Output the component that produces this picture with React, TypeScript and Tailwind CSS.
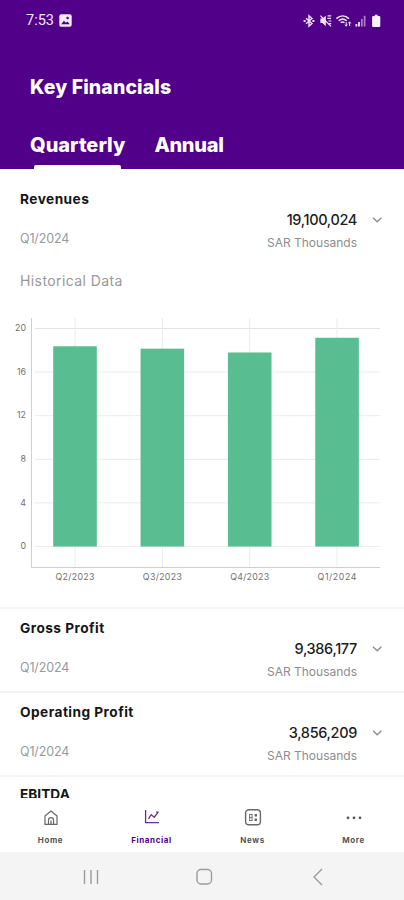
import * as React from "react";
import { clsx } from "clsx";

interface Metric {
  name: string;
  period: string;
  value: string;
}

const revenues: Metric = {
  name: "Revenues",
  period: "Q1/2024",
  value: "19,100,024",
};

const metrics: Metric[] = [
  { name: "Gross Profit", period: "Q1/2024", value: "9,386,177" },
  { name: "Operating Profit", period: "Q1/2024", value: "3,856,209" },
];

const history = [
  { quarter: "Q2/2023", value: 18.37 },
  { quarter: "Q3/2023", value: 18.15 },
  { quarter: "Q4/2023", value: 17.8 },
  { quarter: "Q1/2024", value: 19.15 },
];

const ticks = [0, 4, 8, 12, 16, 20];

const StatusIcons = () => (
  <svg width="80" height="14" viewBox="0 0 80 14" fill="none" stroke="#f1e6fb">
    {/* bluetooth */}
    <path d="m4 4.2 6 5.2-3 2.8V1.8l3 2.8L4 9.8" strokeWidth="1.4" />
    <path d="M1.6 7h2M10.4 7h2" strokeWidth="2" />
    {/* muted */}
    <path d="M18.4 4.6h2l3.4-2.8v10.4L20.4 9h-2z" fill="#f1e6fb" stroke="none" />
    <path d="m18.4 1.6 10.6 10.8" strokeWidth="1.3" />
    <path d="M25.4 4.4h3.6M26.4 7h3M25.6 1.9h3.6M26.6 9.6h2.6" strokeWidth="1.2" />
    {/* wifi */}
    <path d="M34.4 4.6c3.8-3.4 8.8-3.4 12.6 0M36.7 6.7c2.5-2.1 5.6-2.1 8 0M38.7 8.7c1.2-1 2.6-1 3.8 0" strokeWidth="1.5" />
    <path d="M44.2 8v4M43 10.6l1.2 1.6 1.2-1.6M47.6 12V8M46.4 9.4l1.2-1.6 1.2 1.6" strokeWidth="1" />
    {/* signal */}
    <path d="M54.4 12.6V10M57 12.6V8" strokeWidth="1.8" />
    <path d="M59.8 12.6V5M62.6 12.6V1.8" strokeWidth="1.8" opacity="0.55" />
    {/* battery */}
    <path d="M71.3 2h1.5V.8h2.8V2h1.5q1.2 0 1.2 1v9q0 1-1.2 1h-5.8q-1.2 0-1.2-1V3q0-1 1.2-1z" fill="#f8f1fd" stroke="none" />
  </svg>
);

const PictureIcon = () => (
  <svg width="13" height="13" viewBox="0 0 13 13">
    <rect x="0.3" y="0.3" width="12.4" height="12.4" rx="2" fill="#f3eafa" />
    <path d="m2.2 10.3 2.7-3.5 2 2 1.6-1.4 2.3 2.9z" fill="#510089" />
    <circle cx="8.6" cy="4" r="1.3" fill="#510089" />
  </svg>
);

const Chevron = () => (
  <svg width="12" height="8" viewBox="0 0 12 8" fill="none" stroke="#8d8d8d" strokeWidth="1.4">
    <path d="M2 1.8 6.2 5.7l4.2-3.9" />
  </svg>
);

const MetricRow = ({ metric }: { metric: Metric }) => (
  <div className="flex h-[82px] justify-between pl-5 pr-[21px]">
    <div className="pt-[9px]">
      <h2 className="text-[13.7px] leading-[20px] font-bold tracking-[0.45px] text-[#161616]">
        {metric.name}
      </h2>
      <p className="mt-5 text-[12.5px] leading-[20px] tracking-[-0.15px] text-[#969b9d]">
        {metric.period}
      </p>
    </div>
    <div className="flex gap-[14px] pt-[29px]">
      <div className="text-right">
        <p className="text-[14.5px] leading-[22px] font-medium tracking-[-0.35px] text-[#1d1d1d]">
          {metric.value}
        </p>
        <p className="mt-[2px] text-[12px] leading-[20px] text-[#8d8d8d]">SAR Thousands</p>
      </div>
      <div className="pt-[7px]">
        <Chevron />
      </div>
    </div>
  </div>
);

const HistoryChart = () => {
  const y = (v: number) => 228.5 - v * 10.9;
  const x = (i: number) => 75 + i * 87.35;

  return (
    <svg width="404" height="276" viewBox="0 0 404 276" className="block">
      {ticks.map((t) => (
        <g key={t}>
          <line x1="35" x2="380" y1={y(t)} y2={y(t)} stroke={t === 20 ? "#e3e3e3" : "#ececec"} />
          <text x="26" y={y(t) + 2.7} textAnchor="end" fontSize="8.8" fill="#707070">
            {t}
          </text>
        </g>
      ))}
      {history.map((h, i) => (
        <g key={h.quarter}>
          <line x1={x(i)} x2={x(i)} y1="0" y2="249" stroke="#ebebeb" />
          <rect x={x(i) - 21.8} y={y(h.value)} width="43.6" height={y(0) - y(h.value)} fill="#58be91" />
          <text x={x(i)} y="262.4" textAnchor="middle" fontSize="8.8" fill="#707070" textLength="39">
            {h.quarter}
          </text>
        </g>
      ))}
      <path d="M31.5 0v249.5H380" fill="none" stroke="#cfcfcf" />
    </svg>
  );
};

const icons = {
  home: (
    <svg width="16" height="18" viewBox="0 0 16 18" fill="none" stroke="#686868" strokeWidth="1.2">
      <path d="M2 8 8 3l6 5v8.4H2z" strokeLinejoin="round" />
      <path d="M5.5 16.2V12q0-2.3 2.5-2.3t2.5 2.3v4.2M8 12.6v3.5" />
    </svg>
  ),
  financial: (
    <svg width="16" height="18" viewBox="0 0 16 18" fill="none" stroke="#62309d" strokeWidth="1.3">
      <path d="M1.6 2v12.6H15" />
      <path d="m4.4 10.8 2.8-4.2 3 2.6 4-5M12.2 4.2h2.4" />
    </svg>
  ),
  news: (
    <svg width="18" height="18" viewBox="0 0 18 18" fill="none" stroke="#686868">
      <rect x="1.6" y="1.8" width="14.8" height="15" rx="3.4" strokeWidth="1.4" />
      <path d="M5.6 6v7M8 6v7M5.2 6.4h3.2M5.2 9.5h3.2M5.2 12.6h3.2" strokeWidth="0.9" />
      <path d="M10.6 7.3h2.4M10.6 11.7h2.4" strokeWidth="2.6" />
    </svg>
  ),
  more: (
    <svg width="18" height="18" viewBox="0 0 18 18" fill="#555">
      <circle cx="3" cy="9.8" r="1.4" />
      <circle cx="9" cy="9.8" r="1.4" />
      <circle cx="15" cy="9.8" r="1.4" />
    </svg>
  ),
};

const navItems: { label: string; icon: React.ReactNode; active?: boolean }[] = [
  { label: "Home", icon: icons.home },
  { label: "Financial", icon: icons.financial, active: true },
  { label: "News", icon: icons.news },
  { label: "More", icon: icons.more },
];

const Header = () => (
  <header className="flex h-[169px] flex-col bg-[#510089] text-white">
    <div className="flex h-[41px] items-center justify-between pl-[26px] pr-[22px]">
      <div className="flex items-center gap-[5px]">
        <span className="font-['Roboto'] text-[14.5px] text-[#f1e6fb]">7:53</span>
        <PictureIcon />
      </div>
      <StatusIcons />
    </div>
    <h1 className="mt-[32px] pl-[30px] text-[19.5px] leading-[28px] font-extrabold tracking-[0.1px]">
      Key Financials
    </h1>
    <nav className="mt-auto flex gap-[29px] pl-[30px] text-[20px] leading-[28px] font-extrabold">
      <button className="flex flex-col pt-px">
        Quarterly
        <span className="mt-[6px] ml-1 h-1 w-[87px] rounded-t-xs bg-white" />
      </button>
      <button className="flex flex-col pt-px tracking-[-0.3px]">Annual</button>
    </nav>
  </header>
);

export default function App() {
  return (
    <div className="flex h-[900px] w-[404px] flex-col overflow-hidden bg-white font-['Inter','Liberation_Sans',sans-serif]">
      <Header />
      <main className="h-[629px] overflow-hidden pt-[11px]">
        <MetricRow metric={revenues} />
        <h3 className="mt-[9px] pl-5 text-[14px] leading-[20px] tracking-[0.4px] text-[#999]">
          Historical Data
        </h3>
        <div className="mt-[27px] h-[289px]">
          <HistoryChart />
        </div>
        {metrics.map((m) => (
          <section key={m.name} className="border-t-2 border-[#f4f4f4]">
            <MetricRow metric={m} />
          </section>
        ))}
        <section className="border-t-2 border-[#f4f4f4] pl-5 pt-[7px]">
          <h2 className="text-[13.7px] leading-[20px] font-bold text-[#161616]">EBITDA</h2>
        </section>
      </main>
      <nav className="grid h-[54px] shrink-0 grid-cols-4 bg-white">
        {navItems.map((item) => (
          <button key={item.label} className="flex flex-col items-center pt-[10px]">
            {item.icon}
            <span
              className={clsx(
                "mt-[8px] text-[8px] leading-[12px] font-bold tracking-[0.6px]",
                item.active ? "text-[#510089]" : "text-[#555]",
              )}
            >
              {item.label}
            </span>
          </button>
        ))}
      </nav>
      <footer className="flex h-12 items-center justify-center bg-[#f4f4f4]">
        <svg width="404" height="48" viewBox="0 0 404 48" fill="none" stroke="#9b9b9b" strokeWidth="1.4">
          <path d="M84.5 18v14M91 18v14M97.5 18v14" />
          <rect x="197" y="17.5" width="14.5" height="14.5" rx="4" />
          <path d="m322 17-8 8 8 8" />
        </svg>
      </footer>
    </div>
  );
}
